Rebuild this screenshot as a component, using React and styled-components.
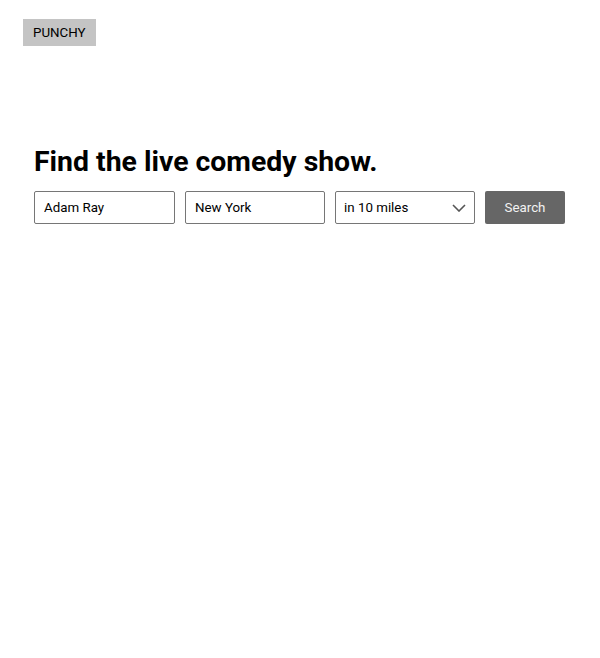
import React from "react";
import styled, { createGlobalStyle } from "styled-components";

const Global = createGlobalStyle`
  body {
    margin: 0;
    background: #fff;
    font-family: Roboto, "Liberation Sans", sans-serif;
    color: #000;
  }
`;

const Page = styled.div`
  padding: 19px 23px;
`;

const Logo = styled.div`
  display: inline-block;
  background: #c4c4c4;
  font-size: 13.33px;
  line-height: 27px;
  padding: 0 10px;
  height: 27px;
  box-sizing: border-box;
`;

const Hero = styled.section`
  margin-top: 99px;
  padding-left: 11px;
`;

const Title = styled.h1`
  margin: 0 0 12px;
  font-size: 28.4px;
  font-weight: 700;
  line-height: 34px;
`;

const Form = styled.form`
  display: flex;
  gap: 10px;
`;

const Field = styled.input`
  width: ${(p) => p.$w || 140}px;
  height: 33px;
  box-sizing: border-box;
  border: 1px solid #767676;
  border-radius: 2px;
  padding: 0 9px;
  font-family: inherit;
  font-size: 13.33px;
  color: #000;
  outline: none;
`;

const SelectWrap = styled.div`
  width: 140px;
  height: 33px;
  box-sizing: border-box;
  border: 1px solid #767676;
  border-radius: 2px;
  padding: 0 8px;
  display: flex;
  align-items: center;
  justify-content: space-between;
  font-size: 13.33px;
`;

const Button = styled.button`
  width: 80px;
  height: 33px;
  border: none;
  border-radius: 2px;
  background: #666;
  color: #f2f2f2;
  font-family: inherit;
  font-size: 13.33px;
`;

const Chevron = () => (
  <svg width="14" height="8" viewBox="0 0 14 8">
    <path d="M1 1l6 6 6-6" fill="none" stroke="#555" strokeWidth="1.6" />
  </svg>
);

export default function App() {
  return (
    <Page>
      <Global />
      <Logo>PUNCHY</Logo>
      <Hero>
        <Title>Find the live comedy show.</Title>
        <Form onSubmit={(e) => e.preventDefault()}>
          <Field $w={141} defaultValue="Adam Ray" />
          <Field defaultValue="New York" />
          <SelectWrap>
            <span>in 10 miles</span>
            <Chevron />
          </SelectWrap>
          <Button type="submit">Search</Button>
        </Form>
      </Hero>
    </Page>
  );
}
